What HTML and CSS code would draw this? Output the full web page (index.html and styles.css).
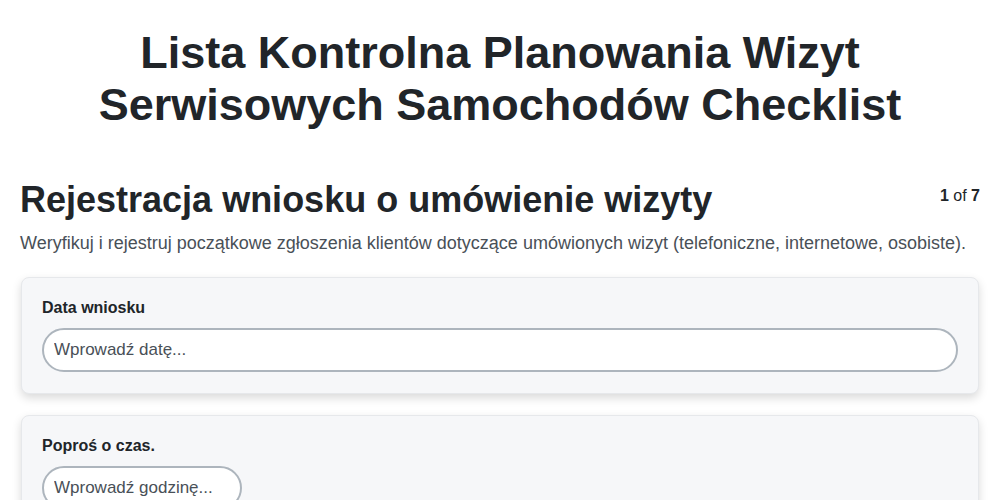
FILE: index.html
```html
<!DOCTYPE html>
<html lang="pl">
  <head>
    <meta charset="utf-8">
    <link rel="stylesheet" href="styles.css">
  </head>
  <body>
    <div class="page">
      <h1 class="title">Lista Kontrolna Planowania Wizyt Serwisowych Samochodów Checklist</h1>

      <div class="section">
        <div class="section-header">
          <h2 class="section-title">Rejestracja wniosku o umówienie wizyty</h2>
          <div class="step-count"><b>1</b> of <b>7</b></div>
        </div>
        <p class="section-desc">Weryfikuj i rejestruj początkowe zgłoszenia klientów dotyczące umówionych wizyt (telefoniczne, internetowe, osobiste).</p>

        <div class="card">
          <label class="field-label">Data wniosku</label>
          <input class="field-input" type="text" placeholder="Wprowadź datę...">
        </div>

        <div class="card">
          <label class="field-label">Poproś o czas.</label>
          <input class="field-input short" type="text" placeholder="Wprowadź godzinę...">
        </div>
      </div>
    </div>
  </body>
</html>
```

FILE: styles.css
```css
body {
  margin: 0;
  background-color: #fff;
  font-family: "Liberation Sans", Arial, sans-serif;
  color: #212529;
}

.page {
  padding: 0 20px;
}

.title {
  margin: 0;
  padding: 27px 60px 0;
  font-size: 45px;
  line-height: 1.16;
  font-weight: 700;
  text-align: center;
}

.section {
  margin-top: 47px;
}

.section-header {
  display: flex;
  justify-content: space-between;
  align-items: flex-start;
}

.section-title {
  margin: 0;
  font-size: 36px;
  line-height: 1.2;
  font-weight: 700;
}

.step-count {
  padding-top: 9px;
  font-size: 16px;
}

.section-desc {
  margin: 10px 0 22px;
  font-size: 18px;
  line-height: 1.3;
  color: #495057;
}

.card {
  background-color: #f6f7f9;
  border: 1px solid #e6e8eb;
  border-radius: 8px;
  padding: 21px 20px 21px;
  margin: 0 1px 21px;
  box-shadow: 0 4px 10px rgba(0, 0, 0, 0.15);
}

.field-label {
  display: block;
  font-size: 16px;
  line-height: 18px;
  font-weight: 700;
  margin-bottom: 11px;
}

.field-input {
  display: block;
  width: 100%;
  box-sizing: border-box;
  height: 44px;
  padding: 0 10px;
  border: 2px solid #adb5bd;
  border-radius: 22px;
  background-color: #fff;
  font-family: inherit;
  font-size: 17px;
  color: #212529;
}

.field-input::placeholder {
  color: #495057;
}

.field-input.short {
  width: 200px;
}
```
